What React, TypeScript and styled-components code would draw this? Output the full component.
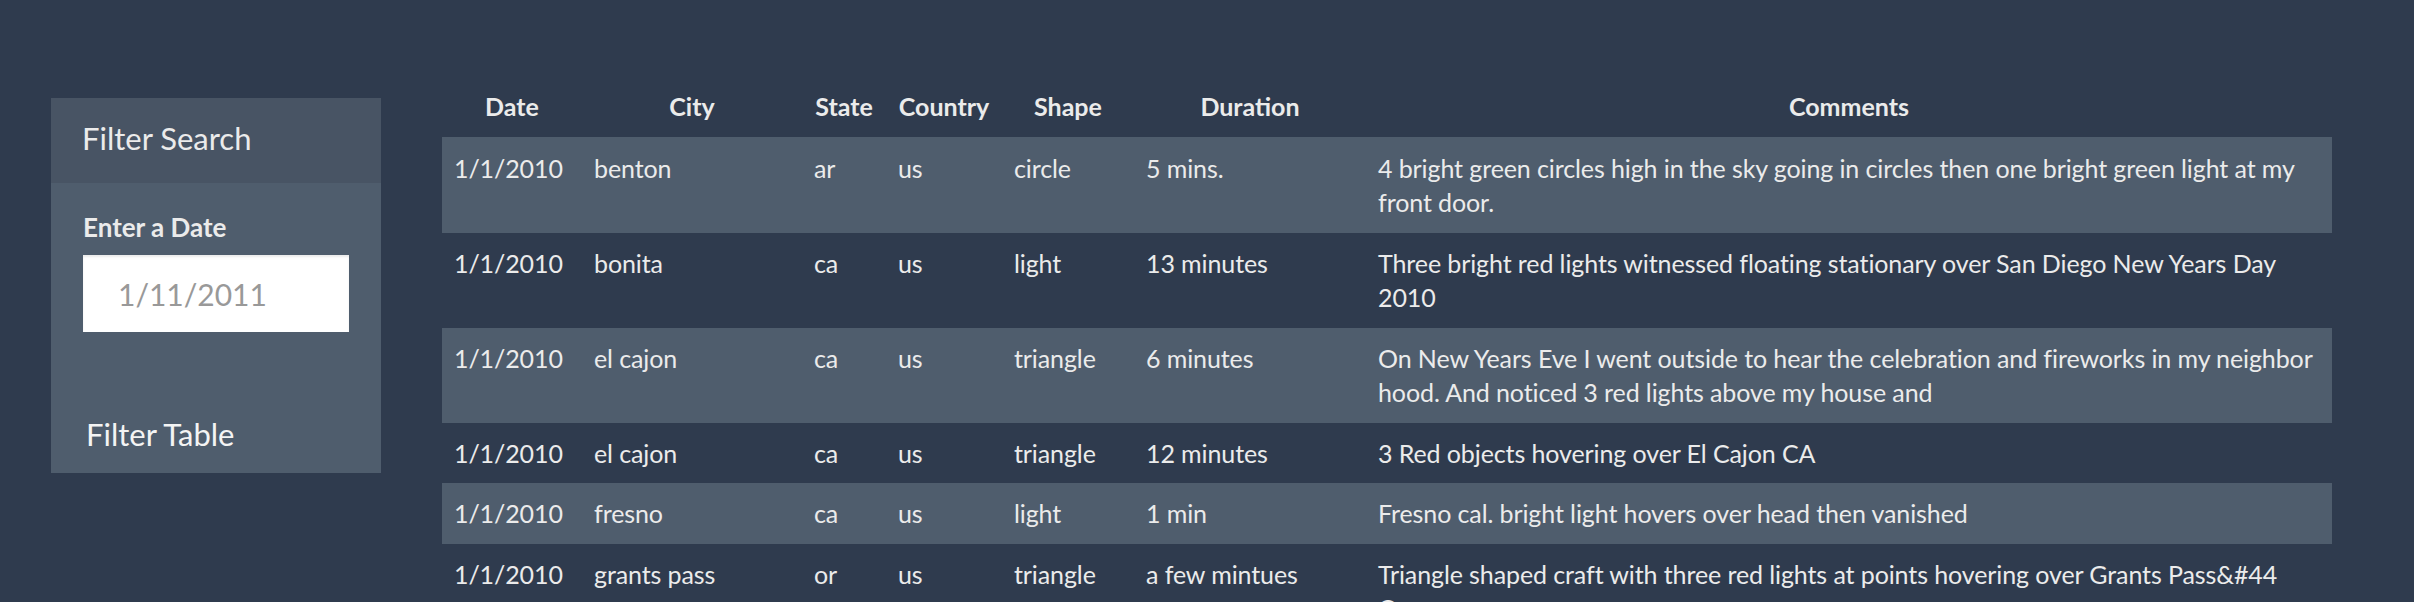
import React from "react";
import styled, { createGlobalStyle } from "styled-components";

const GlobalStyle = createGlobalStyle`
  html, body {
    margin: 0;
    padding: 0;
    background: #2f3b4e;
  }
  body {
    font-family: Lato, "Open Sans", "Liberation Sans", sans-serif;
    color: #ebebeb;
  }
`;

const Page = styled.div`
  display: flex;
  align-items: flex-start;
  gap: 61px;
  box-sizing: border-box;
  width: 2414px;
  height: 602px;
  overflow: hidden;
  padding: 77px 83px 0 51px;
`;

const Panel = styled.aside`
  flex: 0 0 329px;
  margin-top: 21px;
  background: #4f5d6d;
  display: flex;
  flex-direction: column;
`;

const PanelHeading = styled.div`
  box-sizing: border-box;
  height: 85px;
  padding: 20px 0 0 31px;
  background: #485464;
`;

const PanelTitle = styled.h3`
  margin: 0;
  font-size: 31px;
  line-height: 40px;
  font-weight: 400;
  color: #ebebeb;
`;

const PanelBody = styled.div`
  display: flex;
  flex-direction: column;
  align-items: flex-start;
  padding: 27px 32px 19px;
`;

const Label = styled.label`
  font-size: 26px;
  line-height: 34px;
  font-weight: 700;
  color: #ebebeb;
  margin-bottom: 11px;
`;

const DateInput = styled.input`
  box-sizing: border-box;
  width: 266px;
  height: 77px;
  border: none;
  outline: none;
  background: #ffffff;
  box-shadow: inset 0 2px 2px rgba(0, 0, 0, 0.08);
  padding: 0 12px 0 35px;
  font-family: inherit;
  font-size: 30px;
  color: #333;
  &::placeholder {
    color: #999999;
  }
`;

const FilterButton = styled.button`
  margin-top: 82px;
  padding: 0 3px;
  border: none;
  background: transparent;
  font-family: inherit;
  font-size: 31px;
  line-height: 40px;
  color: #f4f4f4;
  cursor: pointer;
`;

const TableWrap = styled.main`
  flex: 0 0 1890px;
`;

const Table = styled.table`
  width: 1890px;
  border-collapse: collapse;
  table-layout: fixed;
  font-size: 25px;
  line-height: 34.5px;
`;

const Th = styled.th<{ $w: number }>`
  box-sizing: border-box;
  width: ${(p) => p.$w}px;
  padding: 12px 12px;
  border-bottom: 2px solid transparent;
  font-weight: 700;
  text-align: center;
  color: #ebebeb;
`;

const Row = styled.tr<{ $striped: boolean }>`
  background: ${(p) => (p.$striped ? "#4f5d6d" : "transparent")};
`;

const Td = styled.td`
  padding: 13px 12px;
  vertical-align: top;
  text-align: left;
  color: #ebebeb;
  letter-spacing: -0.1px;
  &:last-child {
    padding-right: 6px;
  }
`;

type Sighting = {
  datetime: string;
  city: string;
  state: string;
  country: string;
  shape: string;
  duration: string;
  comments: string;
};

const columns: { key: keyof Sighting; label: string; w: number }[] = [
  { key: "datetime", label: "Date", w: 140 },
  { key: "city", label: "City", w: 220 },
  { key: "state", label: "State", w: 84 },
  { key: "country", label: "Country", w: 116 },
  { key: "shape", label: "Shape", w: 132 },
  { key: "duration", label: "Duration", w: 232 },
  { key: "comments", label: "Comments", w: 966 },
];

const data: Sighting[] = [
  {
    datetime: "1/1/2010",
    city: "benton",
    state: "ar",
    country: "us",
    shape: "circle",
    duration: "5 mins.",
    comments:
      "4 bright green circles high in the sky going in circles then one bright green light at my front door.",
  },
  {
    datetime: "1/1/2010",
    city: "bonita",
    state: "ca",
    country: "us",
    shape: "light",
    duration: "13 minutes",
    comments:
      "Three bright red lights witnessed floating stationary over San Diego New Years Day 2010",
  },
  {
    datetime: "1/1/2010",
    city: "el cajon",
    state: "ca",
    country: "us",
    shape: "triangle",
    duration: "6 minutes",
    comments:
      "On New Years Eve I went outside to hear the celebration and fireworks in my neighbor hood. And noticed 3 red lights above my house and",
  },
  {
    datetime: "1/1/2010",
    city: "el cajon",
    state: "ca",
    country: "us",
    shape: "triangle",
    duration: "12 minutes",
    comments: "3 Red objects hovering over El Cajon CA",
  },
  {
    datetime: "1/1/2010",
    city: "fresno",
    state: "ca",
    country: "us",
    shape: "light",
    duration: "1 min",
    comments: "Fresno cal. bright light hovers over head then vanished",
  },
  {
    datetime: "1/1/2010",
    city: "grants pass",
    state: "or",
    country: "us",
    shape: "triangle",
    duration: "a few mintues",
    comments:
      "Triangle shaped craft with three red lights at points hovering over Grants Pass&#44 Oregon.",
  },
];

export default function App() {
  return (
    <>
      <GlobalStyle />
      <Page>
        <Panel>
          <PanelHeading>
            <PanelTitle>Filter Search</PanelTitle>
          </PanelHeading>
          <PanelBody>
            <Label htmlFor="datetime">Enter a Date</Label>
            <DateInput id="datetime" type="text" placeholder="1/11/2011" />
            <FilterButton type="button">Filter Table</FilterButton>
          </PanelBody>
        </Panel>
        <TableWrap>
          <Table>
            <thead>
              <tr>
                {columns.map((c) => (
                  <Th key={c.key} $w={c.w}>
                    {c.label}
                  </Th>
                ))}
              </tr>
            </thead>
            <tbody>
              {data.map((row, i) => (
                <Row key={i} $striped={i % 2 === 0}>
                  {columns.map((c) => (
                    <Td key={c.key}>{row[c.key]}</Td>
                  ))}
                </Row>
              ))}
            </tbody>
          </Table>
        </TableWrap>
      </Page>
    </>
  );
}
